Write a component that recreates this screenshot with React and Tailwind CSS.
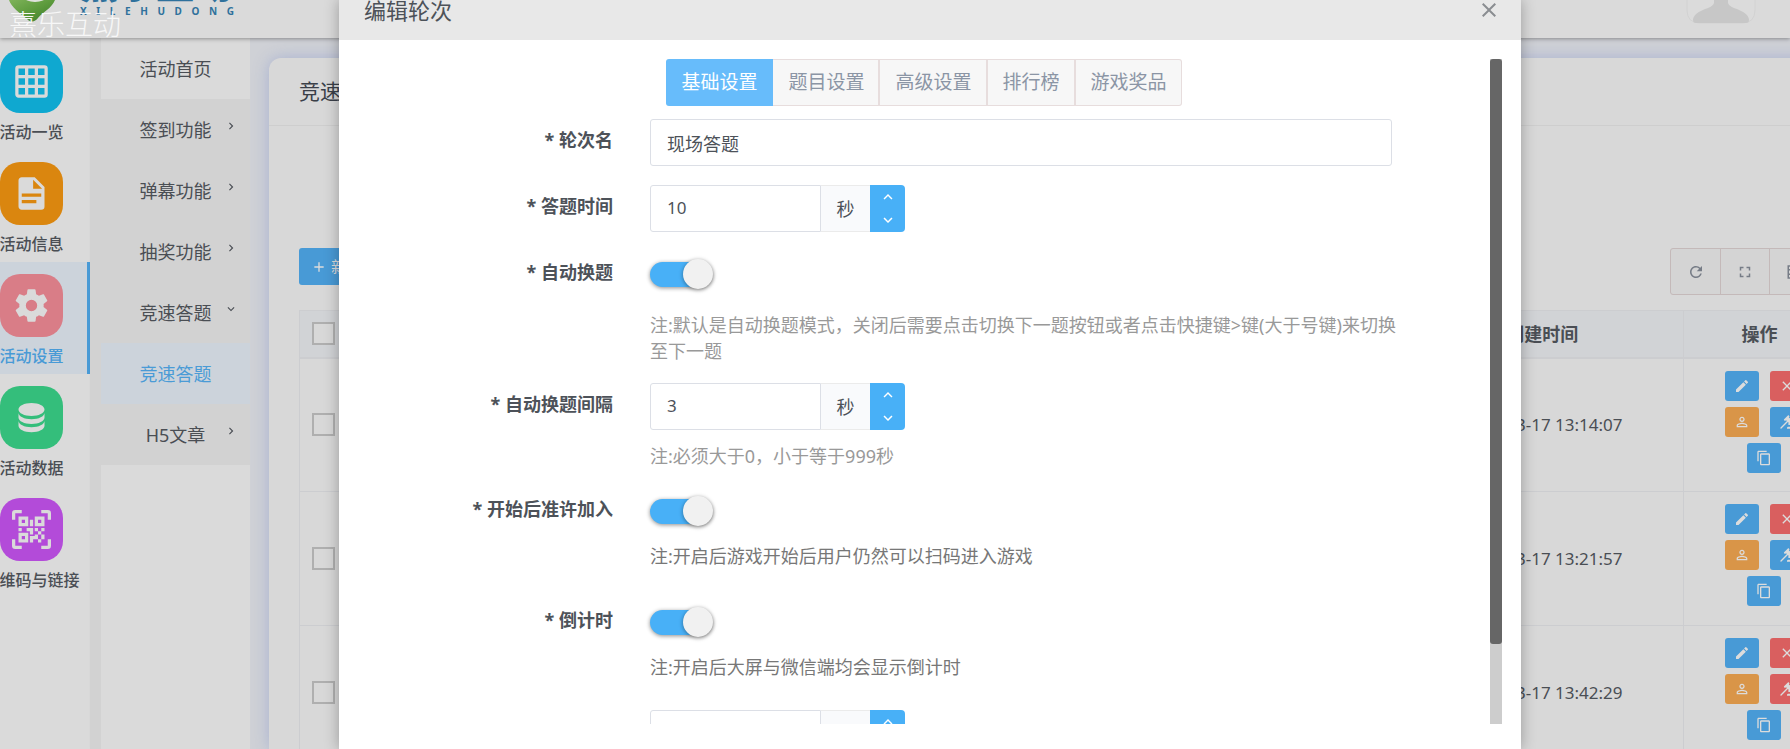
import React, { useState } from 'react';
import {
  MdAdd,
  MdClose,
  MdContentCopy,
  MdEdit,
  MdFullscreen,
  MdKeyboardArrowDown,
  MdKeyboardArrowRight,
  MdKeyboardArrowUp,
  MdPersonOutline,
  MdRefresh,
} from 'react-icons/md';

const ICONS = {
  grid: 'M10,4V8H14V4H10M16,4V8H20V4H16M16,10V14H20V10H16M16,16V20H20V16H16M14,20V16H10V20H14M8,20V16H4V20H8M8,14V10H4V14H8M8,8V4H4V8H8M10,14H14V10H10V14M4,2H20A2,2 0 0,1 22,4V20A2,2 0 0,1 20,22H4C2.92,22 2,21.1 2,20V4A2,2 0 0,1 4,2Z',
  file: 'M13,9H18.5L13,3.5V9M6,2H14L20,8V20A2,2 0 0,1 18,22H6C4.89,22 4,21.1 4,20V4C4,2.89 4.89,2 6,2M15,18V16H6V18H15M18,14V12H6V14H18Z',
  cog: 'M12,15.5A3.5,3.5 0 0,1 8.5,12A3.5,3.5 0 0,1 12,8.5A3.5,3.5 0 0,1 15.5,12A3.5,3.5 0 0,1 12,15.5M19.43,12.97C19.47,12.65 19.5,12.33 19.5,12C19.5,11.67 19.47,11.34 19.43,11L21.54,9.37C21.73,9.22 21.78,8.95 21.66,8.73L19.66,5.27C19.54,5.05 19.27,4.96 19.05,5.05L16.56,6.05C16.04,5.66 15.5,5.32 14.87,5.07L14.5,2.42C14.46,2.18 14.25,2 14,2H10C9.75,2 9.54,2.18 9.5,2.42L9.13,5.07C8.5,5.32 7.96,5.66 7.44,6.05L4.95,5.05C4.73,4.96 4.46,5.05 4.34,5.27L2.34,8.73C2.21,8.95 2.27,9.22 2.46,9.37L4.57,11C4.53,11.34 4.5,11.67 4.5,12C4.5,12.33 4.53,12.65 4.57,12.97L2.46,14.63C2.27,14.78 2.21,15.05 2.34,15.27L4.34,18.73C4.46,18.95 4.73,19.03 4.95,18.95L7.44,17.94C7.96,18.34 8.5,18.68 9.13,18.93L9.5,21.58C9.54,21.82 9.75,22 10,22H14C14.25,22 14.46,21.82 14.5,21.58L14.87,18.93C15.5,18.67 16.04,18.34 16.56,17.94L19.05,18.95C19.27,19.03 19.54,18.95 19.66,18.73L21.66,15.27C21.78,15.05 21.73,14.78 21.54,14.63L19.43,12.97Z',
  database: 'M12,3C7.58,3 4,4.79 4,7C4,9.21 7.58,11 12,11C16.42,11 20,9.21 20,7C20,4.79 16.42,3 12,3M4,9V12C4,14.21 7.58,16 12,16C16.42,16 20,14.21 20,12V9C20,11.21 16.42,13 12,13C7.58,13 4,11.21 4,9M4,14V17C4,19.21 7.58,21 12,21C16.42,21 20,19.21 20,17V14C20,16.21 16.42,18 12,18C7.58,18 4,16.21 4,14Z',
  qrcode: 'M4,4H10V10H4V4M20,4V10H14V4H20M14,15H16V13H14V11H16V13H18V11H20V13H18V15H20V18H18V20H16V18H13V20H11V16H14V15M16,15V18H18V15H16M4,20V14H10V20H4M6,6V8H8V6H6M16,6V8H18V6H16M6,16V18H8V16H6M4,11H6V13H4V11M9,11H13V15H11V13H9V11M11,6H13V10H11V6M2,2V6H0V2A2,2 0 0,1 2,0H6V2H2M22,0A2,2 0 0,1 24,2V6H22V2H18V0H22M2,18V22H6V24H2A2,2 0 0,1 0,22V18H2M22,22V18H24V22A2,2 0 0,1 22,24H18V22H22Z',
  gavel: 'M2.3,20.28L11.9,10.68L10.5,9.26L9.78,9.97C9.39,10.36 8.76,10.36 8.37,9.97L7.66,9.26C7.27,8.87 7.27,8.24 7.66,7.85L13.32,2.19C13.71,1.8 14.34,1.8 14.73,2.19L15.44,2.9C15.83,3.29 15.83,3.92 15.44,4.31L14.73,5L16.15,6.43C16.54,6.04 17.17,6.04 17.56,6.43C17.95,6.82 17.95,7.46 17.56,7.85L18.97,9.26L19.68,8.55C20.07,8.16 20.71,8.16 21.1,8.55L21.8,9.26C22.19,9.65 22.19,10.28 21.8,10.68L16.15,16.33C15.76,16.72 15.12,16.72 14.73,16.33L14.02,15.63C13.63,15.24 13.63,14.6 14.02,14.21L14.73,13.5L13.32,12.09L3.71,21.7C3.32,22.09 2.69,22.09 2.3,21.7C1.91,21.31 1.91,20.67 2.3,20.28M20,19A2,2 0 0,1 22,21V22H12V21A2,2 0 0,1 14,19H20Z',
  columns: 'M2,3H22V21H2V3M4,5V8H8V5H4M10,5V8H20V5H10M4,10V14H8V10H4M10,10V14H20V10H10M4,16V19H8V16H4M10,16V19H20V16H10Z',
};

const MODULES = [
  { name: '活动一览', icon: 'grid', color: 'bg-[#0fa8d0]' },
  { name: '活动信息', icon: 'file', color: 'bg-[#da860f]' },
  { name: '活动设置', icon: 'cog', color: 'bg-[#d97d87]', active: true },
  { name: '活动数据', icon: 'database', color: 'bg-[#34be7b]' },
  { name: '二维码与链接', icon: 'qrcode', color: 'bg-[#b34bd9]' },
];

const MENU = [
  { name: '活动首页', style: 'bg-[#dadada] text-[#4a4e54]' },
  { name: '签到功能', arrow: 'right', style: 'text-[#4a4e54]' },
  { name: '弹幕功能', arrow: 'right', style: 'text-[#4a4e54]' },
  { name: '抽奖功能', arrow: 'right', style: 'text-[#4a4e54]' },
  { name: '竞速答题', arrow: 'down', style: 'text-[#4a4e54]' },
  { name: '竞速答题', style: 'bg-[#ccd3db] text-[#4a9bd6]' },
  { name: 'H5文章', arrow: 'right', style: 'text-[#4a4e54]' },
];

const ROWS = [
  { time: '2023-03-17 13:14:07', judge: 'bg-[#489ad6]' },
  { time: '2023-03-17 13:21:57', judge: 'bg-[#489ad6]' },
  { time: '2023-03-17 13:42:29', judge: 'bg-[#d95f5f]' },
];

const TABS = ['基础设置', '题目设置', '高级设置', '排行榜', '游戏奖品'];

function Icon({ name, size }) {
  return (
    <svg width={size} height={size} viewBox="0 0 24 24" fill="currentColor" aria-hidden="true">
      <path d={ICONS[name]} />
    </svg>
  );
}

function Header() {
  return (
    <header className="relative z-10 flex h-[38px] shrink-0 items-start justify-between bg-[#dadada] shadow-[0_1px_4px_rgba(0,0,0,0.35)]">
      <div className="flex h-[38px] items-start overflow-hidden pl-2">
        <svg width="48" height="22" viewBox="0 0 48 22" aria-hidden="true">
          <defs>
            <linearGradient id="pin" x1="0" y1="0" x2="1" y2="1">
              <stop offset="0" stopColor="#7fb35a" />
              <stop offset="0.5" stopColor="#5c9a3c" />
              <stop offset="1" stopColor="#3c7a2c" />
            </linearGradient>
          </defs>
          <path d="M1 0C3 7 12 13 19 19C23 23 27 22 30 18C35 12 44 8 47 0Z" fill="url(#pin)" />
          <ellipse cx="27" cy="-3" rx="11" ry="5" fill="#e0e2de" />
        </svg>
        <div className="ml-6 flex h-[17px] w-[154px] flex-col justify-end font-bold text-[#2f719c]">
          <span className="mb-1 shrink-0 text-[38px] leading-9 font-black whitespace-nowrap">熹乐互动</span>
          <span className="flex shrink-0 justify-between text-[10px] leading-3">
            {'XILEHUDONG'.split('').map((c, i) => (
              <span key={i}>{c}</span>
            ))}
          </span>
        </div>
      </div>
      <svg className="mr-[34px]" width="70" height="24" viewBox="0 0 70 24" aria-hidden="true">
        <path d="M1 0V10Q1 23 14 23H56Q69 23 69 10V0" fill="#dbdbdb" stroke="#d2d2d2" />
        <path d="M28 0V3Q27 6 22 8Q7 13 7 20Q7 23 10 23H60Q63 23 63 20Q63 13 48 8Q43 6 42 3V0Z" fill="#c7c7c7" />
      </svg>
      <span className="absolute top-1 left-[9px] text-[28px] leading-10 font-light text-[#f7f7f7]">熹乐互动</span>
    </header>
  );
}

function ModuleNav() {
  return (
    <nav className="-ml-6 w-[114px] shrink-0 bg-[#dadada]">
      {MODULES.map((m) => (
        <a
          key={m.name}
          href="#"
          className={
            m.active
              ? 'flex h-28 flex-col items-center border-r-3 border-[#489ad6] bg-[#ccd3db] pt-3 text-[#489ad6]'
              : 'flex h-28 flex-col items-center border-r-3 border-transparent pt-3 text-[#4a4e54]'
          }
        >
          <span className={`flex size-[63px] items-center justify-center rounded-[20px] text-[#dadada] ${m.color}`}>
            <Icon name={m.icon} size={39} />
          </span>
          <span className="mt-1.5 text-base leading-[26px] font-medium whitespace-nowrap">{m.name}</span>
        </a>
      ))}
    </nav>
  );
}

function SubMenu() {
  return (
    <div className="w-40 shrink-0 bg-[#d2d2d2] pl-[11px] shadow-[2px_0_4px_rgba(0,0,0,0.08)]">
      <nav className="flex h-full flex-col bg-[#dadada]">
        {MENU.map((item, i) => (
          <a
            key={i}
            href="#"
            className={`relative flex h-[61px] shrink-0 items-center justify-center text-lg ${item.style} ${
              item.style.startsWith('bg') ? '' : 'bg-[#d2d2d2]'
            }`}
          >
            {item.name}
            {item.arrow === 'right' && <MdKeyboardArrowRight className="absolute top-5 right-3 size-3.5" />}
            {item.arrow === 'down' && <MdKeyboardArrowDown className="absolute top-5 right-3 size-3.5" />}
          </a>
        ))}
      </nav>
    </div>
  );
}

function ActionButton({ label, color, children }) {
  return (
    <button
      type="button"
      aria-label={label}
      className={`flex h-[30px] w-[34px] items-center justify-center rounded-[3px] text-base text-[#dcdcdc] ${color}`}
    >
      {children}
    </button>
  );
}

function RoundTable() {
  return (
    <table className="w-full table-fixed border-collapse border border-[#cccdd0] text-[#4a4e54]">
      <thead className="bg-[#d1d3d6]">
        <tr className="h-[47px] border-b-2 border-[#cccdd0]">
          <th className="w-[63px] pl-3 text-left">
            <input type="checkbox" aria-label="全选" className="block size-[23px] appearance-none border-2 border-[#afafaf] bg-[#d8d8d8]" />
          </th>
          <th aria-hidden="true"></th>
          <th className="w-[282px] text-lg font-bold">创建时间</th>
          <th className="w-[152px] border-l border-[#cccdd0] text-lg font-bold">操作</th>
        </tr>
      </thead>
      <tbody>
        {ROWS.map((row) => (
          <tr key={row.time} className="h-[134px] border-b border-[#cccdd0]">
            <td className="pl-3">
              <input type="checkbox" aria-label={row.time} className="block size-[23px] appearance-none border-2 border-[#afafaf]" />
            </td>
            <td></td>
            <td className="text-center text-[17px]">{row.time}</td>
            <td className="border-l border-[#cccdd0] pt-3 align-top">
              <div className="ml-10 flex w-20 flex-wrap justify-center gap-x-[11px] gap-y-1.5">
                <ActionButton label="编辑" color="bg-[#489ad6]"><MdEdit /></ActionButton>
                <ActionButton label="删除" color="bg-[#d95f5f]"><MdClose /></ActionButton>
                <ActionButton label="用户" color="bg-[#d99548]"><MdPersonOutline /></ActionButton>
                <ActionButton label="判定" color={row.judge}><Icon name="gavel" size={16} /></ActionButton>
                <ActionButton label="复制" color="bg-[#489ad6]"><MdContentCopy /></ActionButton>
              </div>
            </td>
          </tr>
        ))}
      </tbody>
    </table>
  );
}

function Main() {
  return (
    <main className="min-w-0 flex-1 bg-[#cfd1d6] pt-5 pl-[19px]">
      <section className="-mr-[76px] h-full rounded-tl-xl bg-[#d8d8d8] shadow-[0_0_16px_rgba(120,140,205,0.45)]">
        <h1 className="h-17 border-b border-[#cecece] pl-[30px] text-[21px] leading-[66px] text-[#3a3f48]">竞速答题</h1>
        <div className="px-[30px] pt-[122px]">
          <div className="mb-[15px] flex items-start justify-between">
            <button type="button" className="flex h-[37px] items-center gap-1 rounded-[3px] bg-[#489ad6] px-3 text-base text-[#dcdcdc]">
              <MdAdd />
              新增
            </button>
            <div className="flex h-[47px] rounded-[3px] border border-[#c4b9b9] bg-[#d4d4d4] text-lg text-[#767c86]">
              <button type="button" aria-label="刷新" className="flex w-[50px] items-center justify-center border-r border-[#c4b9b9]">
                <MdRefresh className="size-[18px]" />
              </button>
              <button type="button" aria-label="全屏" className="flex w-[49px] items-center justify-center border-r border-[#c4b9b9]">
                <MdFullscreen />
              </button>
              <button type="button" aria-label="列" className="flex w-[65px] items-center pl-4">
                <Icon name="columns" size={18} />
              </button>
            </div>
          </div>
          <RoundTable />
        </div>
      </section>
    </main>
  );
}

function Field({ id, label, className = 'mb-[19px]', children }) {
  return (
    <div className={`flex items-start ${className}`}>
      <label htmlFor={id} className="w-1/4 shrink-0 pt-2 pr-7 text-right text-lg leading-[26px] font-bold text-[#4d5259]">
        {label && `* ${label}`}
      </label>
      <div className="mr-[98px] min-w-0 flex-1 pl-[9px]">{children}</div>
    </div>
  );
}

function NumberInput({ id, label, initial }) {
  const [value, setValue] = useState(initial);
  return (
    <div className="flex h-[47px] text-lg text-[#4d5259]">
      <input
        id={id}
        type="text"
        aria-label={label}
        value={value}
        onChange={(e) => setValue(e.target.value)}
        className="w-[171px] rounded-l-[3px] border border-[#dcdfe6] px-4 text-[17px] outline-none"
      />
      <span className="flex w-[49px] items-center justify-center border-y border-[#ebebeb] bg-[#f9fafc]">秒</span>
      <div className="flex w-[35px] flex-col overflow-hidden rounded-r-[4px] bg-[#48b0f7] text-lg text-white">
        <button type="button" aria-label="增加" className="flex flex-1 items-center justify-center" onClick={() => setValue(Number(value) + 1)}>
          <MdKeyboardArrowUp />
        </button>
        <button type="button" aria-label="减少" className="flex flex-1 items-center justify-center" onClick={() => setValue(Number(value) - 1)}>
          <MdKeyboardArrowDown />
        </button>
      </div>
    </div>
  );
}

function Switch({ id }) {
  return (
    <span className="relative mt-2 flex h-[30px] w-[63px] items-center">
      <input
        id={id}
        type="checkbox"
        role="switch"
        defaultChecked
        className="peer h-[25px] w-[62px] appearance-none rounded-full bg-[#ccc] shadow-[0_1px_4px_rgba(0,0,0,0.45)] checked:bg-[#48b0f7]"
      />
      <span className="pointer-events-none absolute top-0 left-0 size-[30px] rounded-full bg-[#f1f1f1] shadow-[0_1px_4px_rgba(0,0,0,0.4)] peer-checked:left-[33px]" />
    </span>
  );
}

function RoundForm() {
  const [tab, setTab] = useState(0);
  return (
    <form className="min-w-0 flex-1 overflow-hidden" onSubmit={(e) => e.preventDefault()}>
      <div className="mb-[13px] flex justify-center">
        {TABS.map((name, i) => (
          <button
            key={name}
            type="button"
            onClick={() => setTab(i)}
            className={
              i === tab
                ? 'h-[47px] bg-[#67bcfb] pr-4 pl-[15px] text-[19px] text-white first:rounded-l-[3px]'
                : 'h-[47px] border-y border-r-2 border-[#e7dddd] bg-[#f7f7f7] pr-3.5 pl-[15px] text-[19px] text-[#8b95a5] last:rounded-r-[3px] last:border-r'
            }
          >
            {name}
          </button>
        ))}
      </div>

      <Field id="name" label="轮次名">
        <input
          id="name"
          type="text"
          defaultValue="现场答题"
          className="h-[47px] w-full rounded-[3px] border border-[#dcdfe6] px-4 text-lg text-[#4d5259] outline-none"
        />
      </Field>
      <Field id="duration" label="答题时间">
        <NumberInput id="duration" initial="10" />
      </Field>
      <Field id="auto" label="自动换题">
        <Switch id="auto" />
        <p className="mt-[23px] -mr-4 text-lg leading-[26px] text-[#999]">
          注:默认是自动换题模式，关闭后需要点击切换下一题按钮或者点击快捷键&gt;键(大于号键)来切换
          <br />
          至下一题
        </p>
      </Field>
      <Field id="interval" label="自动换题间隔">
        <NumberInput id="interval" initial="3" />
        <p className="mt-[13px] text-lg leading-[26px] text-[#999]">注:必须大于0，小于等于999秒</p>
      </Field>
      <Field id="join" label="开始后准许加入" className="mb-[30px]">
        <Switch id="join" />
        <p className="mt-[17px] text-lg leading-[26px] text-[#777]">注:开启后游戏开始后用户仍然可以扫码进入游戏</p>
      </Field>
      <Field id="countdown" label="倒计时" className="mb-[30px]">
        <Switch id="countdown" />
        <p className="mt-[17px] text-lg leading-[26px] text-[#777]">注:开启后大屏与微信端均会显示倒计时</p>
      </Field>
      <Field id="seconds">
        <NumberInput id="seconds" label="倒计时秒数" initial="" />
      </Field>
    </form>
  );
}

function EditModal() {
  return (
    <div
      role="dialog"
      aria-label="编辑轮次"
      className="absolute inset-y-0 right-[269px] left-[339px] z-20 flex flex-col bg-white shadow-[0_0_14px_rgba(0,0,0,0.3)]"
    >
      <div className="flex h-10 shrink-0 items-start justify-between bg-[#e8e8e8] pr-5 pl-[25px] text-[#4d5259]">
        <h2 className="text-[22px] leading-5">编辑轮次</h2>
        <button type="button" aria-label="关闭" className="flex h-5 items-center text-[#8a8d91]">
          <MdClose className="size-6" />
        </button>
      </div>
      <div className="flex min-h-0 flex-1 px-[19px] pt-[19px] pb-[25px]">
        <RoundForm />
        <div className="w-3 shrink-0 bg-[#cdcdcd]">
          <div className="h-[88%] rounded-[3px] bg-[#666]" />
        </div>
      </div>
    </div>
  );
}

export default function App() {
  return (
    <div className="relative flex h-screen flex-col overflow-hidden bg-[#dadada] font-['Noto_Sans','Noto_Sans_CJK_SC',sans-serif] font-normal">
      <Header />
      <div className="flex min-h-0 flex-1">
        <ModuleNav />
        <SubMenu />
        <Main />
      </div>
      <EditModal />
    </div>
  );
}
